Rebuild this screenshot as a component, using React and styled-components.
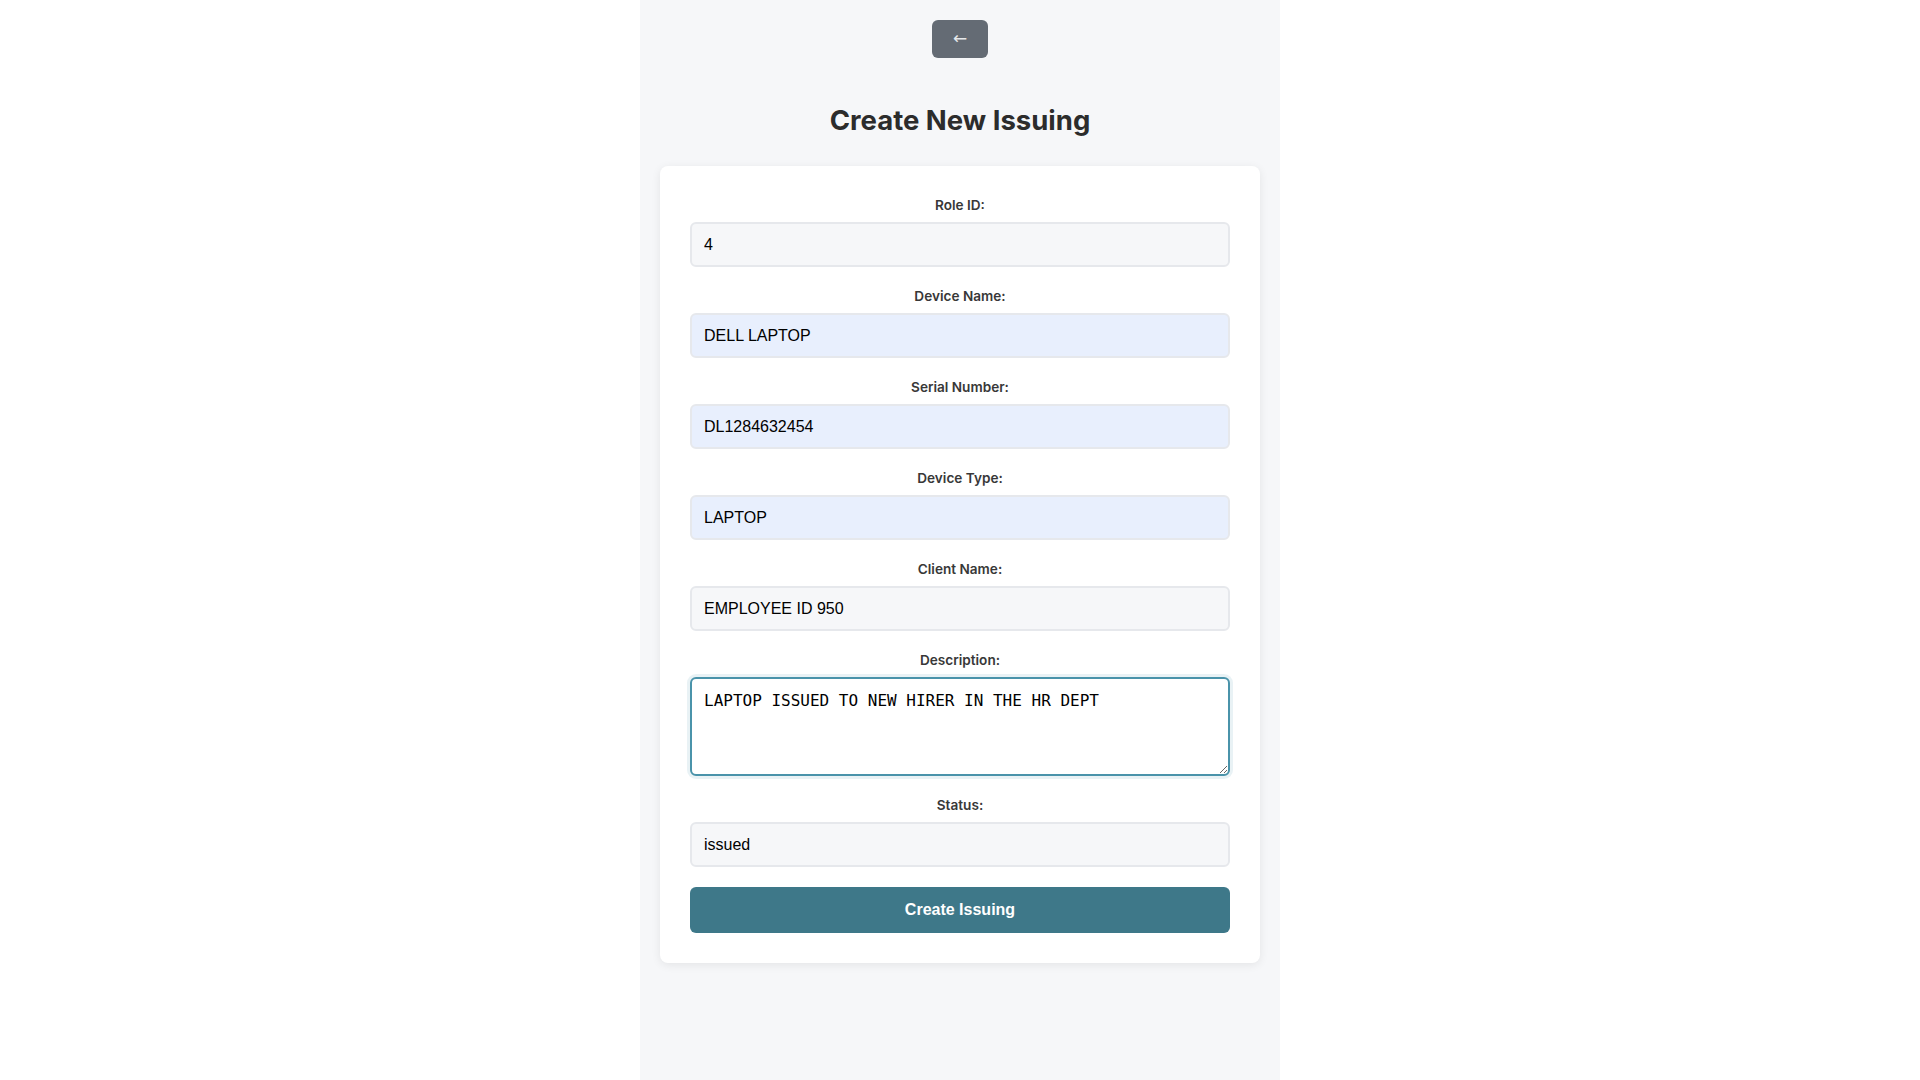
import React from "react";
import styled, { createGlobalStyle } from "styled-components";

const Global = createGlobalStyle`
  html, body { margin: 0; padding: 0; background: #ffffff; }
  body { font-family: Inter, "Noto Sans", sans-serif; }
  * { box-sizing: border-box; }
`;

const Page = styled.div`
  width: 640px;
  min-height: 1080px;
  margin: 0 auto;
  background: #f6f7f9;
  padding: 20px 20px 40px;
  display: flex;
  flex-direction: column;
  align-items: center;
`;

const BackButton = styled.button`
  width: 56px;
  height: 38px;
  border: none;
  border-radius: 6px;
  background: #646b74;
  color: #e6e8ea;
  font-family: "DejaVu Sans", sans-serif;
  font-size: 17px;
  line-height: 1;
  padding: 0 0 1px;
  cursor: pointer;
`;

const Title = styled.h2`
  margin: 45px 0 29px;
  font-size: 27.5px;
  line-height: 34px;
  font-weight: 700;
  color: #2c2c2c;
  text-align: center;
`;

const Card = styled.form`
  width: 600px;
  background: #ffffff;
  border-radius: 8px;
  box-shadow: 0 2px 10px rgba(0, 0, 0, 0.08);
  padding: 30px;
  display: flex;
  flex-direction: column;
  gap: 20px;
`;

const Group = styled.div`
  display: flex;
  flex-direction: column;
`;

const Label = styled.label`
  display: block;
  text-align: center;
  font-size: 13.6px;
  line-height: 18px;
  font-weight: 600;
  color: #383838;
  margin-bottom: 8px;
`;

const Input = styled.input`
  width: 100%;
  height: 45px;
  padding: 0 12px;
  border: 2px solid #e6e8ec;
  border-radius: 6px;
  background: ${(p) => (p.$filled ? "#e8effd" : "#f6f7f9")};
  font-family: "Liberation Sans", Arial, sans-serif;
  font-size: 16px;
  color: #000;
  outline: none;
`;

const TextArea = styled.textarea`
  width: 100%;
  height: 99px;
  padding: 12px;
  border: 2px solid #4a93aa;
  border-radius: 6px;
  background: #ffffff;
  box-shadow: 0 0 0 3px rgba(74, 147, 170, 0.12);
  font-family: "DejaVu Sans Mono", monospace;
  font-size: 16px;
  line-height: 1.2;
  color: #000;
  outline: none;
  resize: vertical;
`;

const Submit = styled.button`
  width: 100%;
  height: 46px;
  border: none;
  border-radius: 6px;
  background: #3e7889;
  color: #ffffff;
  font-family: "Liberation Sans", Arial, sans-serif;
  font-size: 16px;
  font-weight: 700;
  cursor: pointer;
`;

const fields = [
  { label: "Role ID:", value: "4" },
  { label: "Device Name:", value: "DELL LAPTOP", filled: true },
  { label: "Serial Number:", value: "DL1284632454", filled: true },
  { label: "Device Type:", value: "LAPTOP", filled: true },
  { label: "Client Name:", value: "EMPLOYEE ID 950" },
];

export default function App() {
  return (
    <>
      <Global />
      <Page>
        <BackButton type="button">←</BackButton>
        <Title>Create New Issuing</Title>
        <Card onSubmit={(e) => e.preventDefault()}>
          {fields.map((f) => (
            <Group key={f.label}>
              <Label>{f.label}</Label>
              <Input defaultValue={f.value} $filled={f.filled} />
            </Group>
          ))}
          <Group>
            <Label>Description:</Label>
            <TextArea defaultValue="LAPTOP ISSUED TO NEW HIRER IN THE HR DEPT" />
          </Group>
          <Group>
            <Label>Status:</Label>
            <Input defaultValue="issued" />
          </Group>
          <Submit type="submit">Create Issuing</Submit>
        </Card>
      </Page>
    </>
  );
}
